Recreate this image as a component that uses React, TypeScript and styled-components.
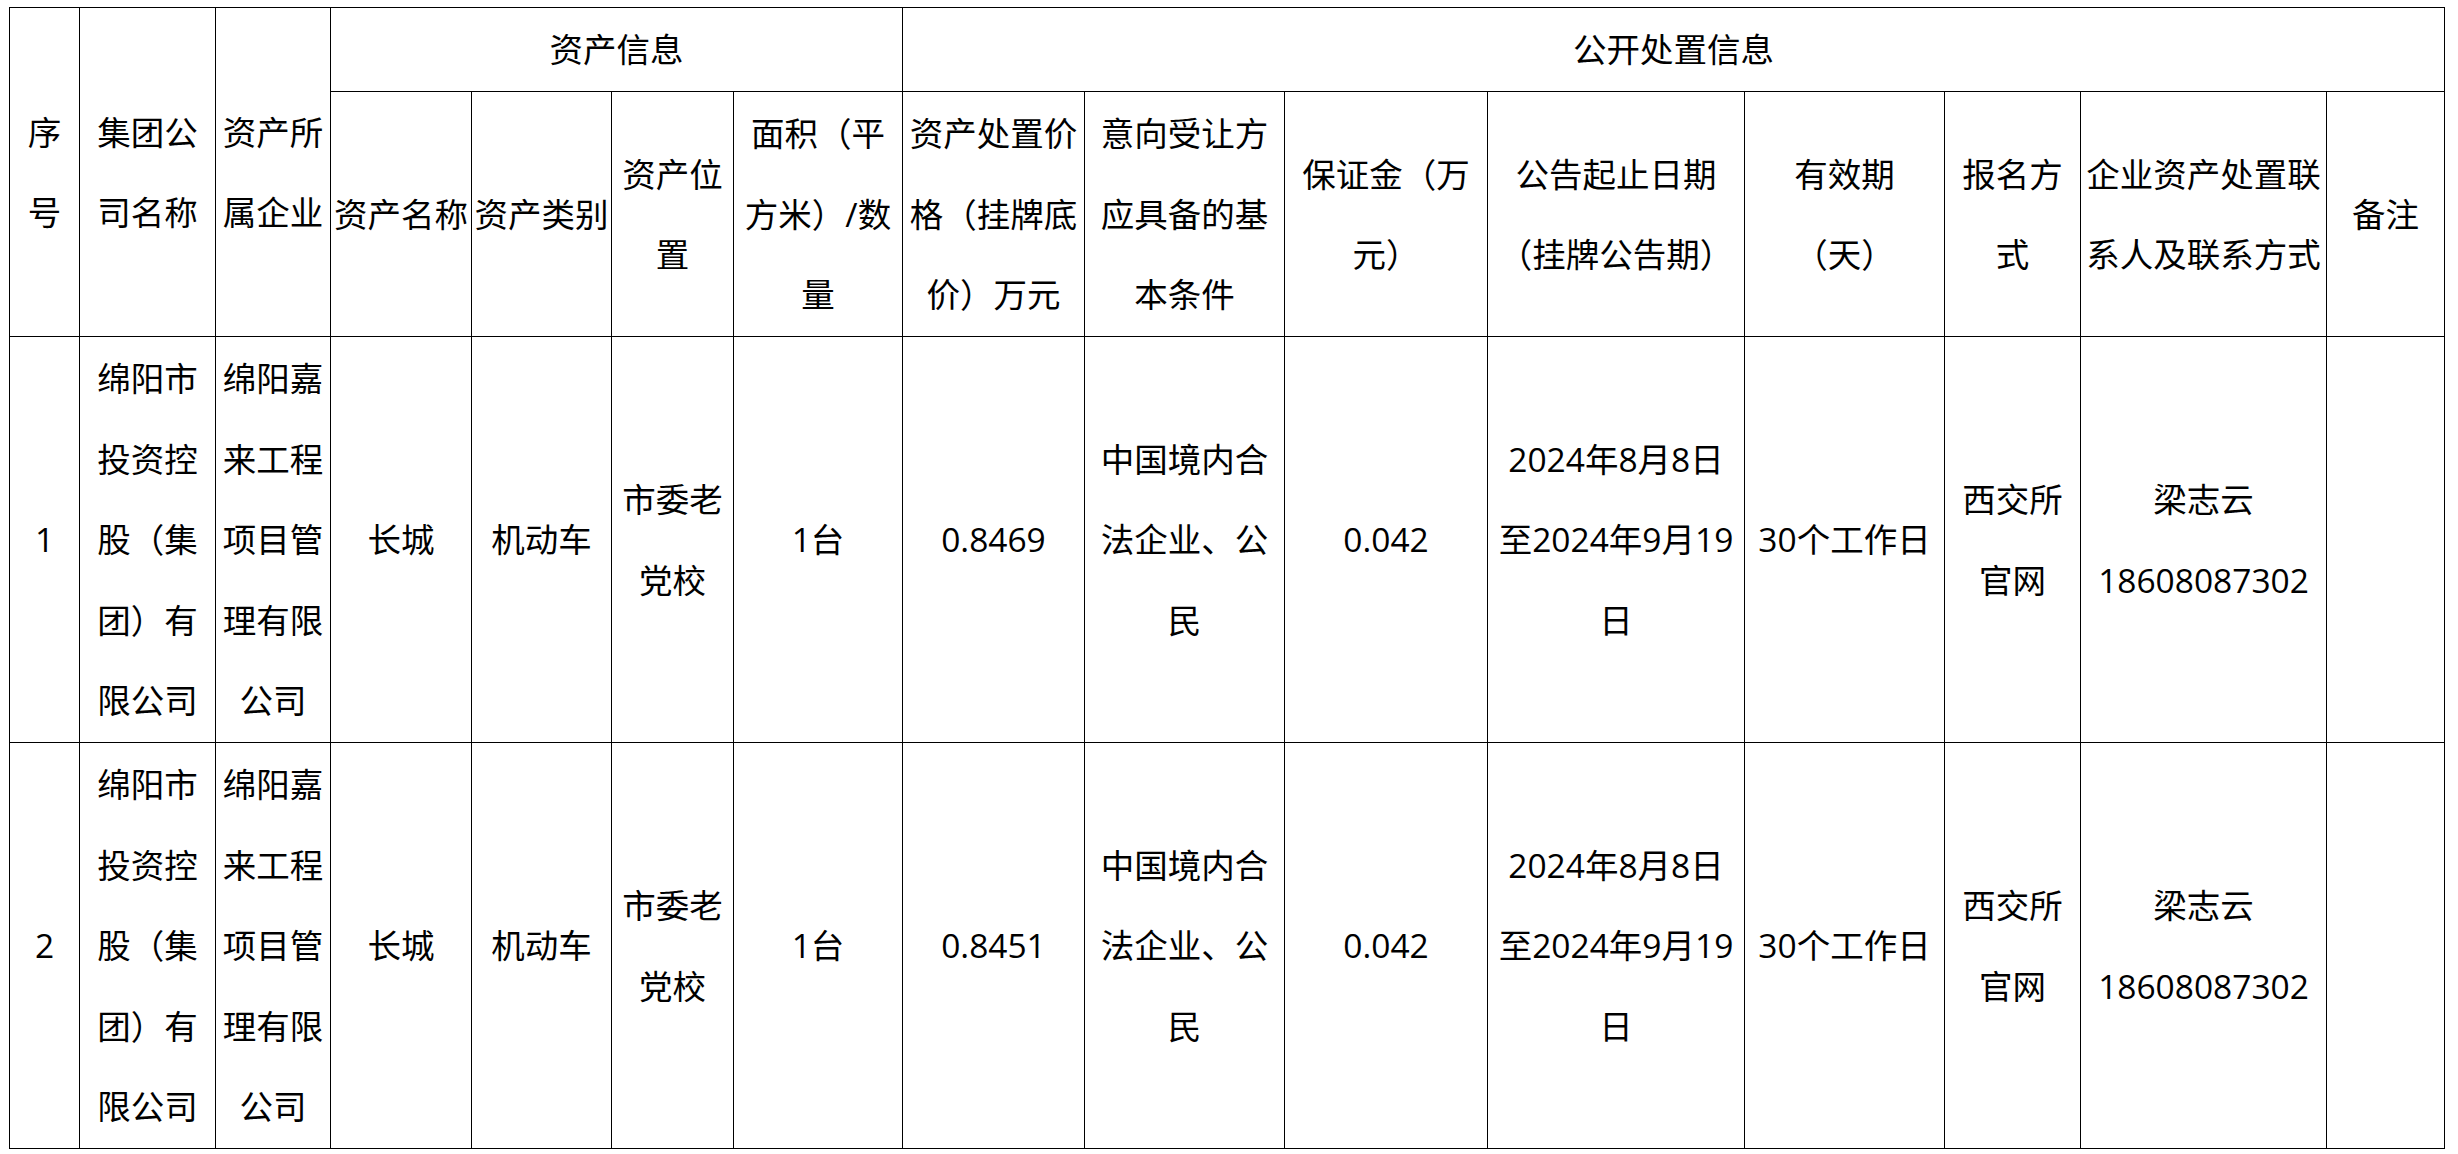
import React from "react";
import styled, { createGlobalStyle } from "styled-components";

const GlobalStyle = createGlobalStyle`
  html, body {
    margin: 0;
    padding: 0;
    background: #ffffff;
  }
  body {
    font-family: "Open Sans", "Noto Sans CJK SC", "Noto Sans", sans-serif;
    color: #000000;
  }
`;

const Page = styled.div`
  padding: 7px 0 0 9px;
`;

const Sheet = styled.div`
  display: grid;
  width: max-content;
  grid-template-columns: 69px 135px 114px 140px 139px 121px 168px 181px 199px 202px 256px 199px 135px 245px 117px;
  grid-template-rows: 83px 244px 405px 405px;
  gap: 1px;
  padding: 1px;
  background: #000000;
  font-size: 33.5px;
`;

const Cell = styled.div<{ $cols?: number; $rows?: number }>`
  grid-column: span ${(p) => p.$cols ?? 1};
  grid-row: span ${(p) => p.$rows ?? 1};
  background: #ffffff;
  display: flex;
  flex-direction: column;
  align-items: center;
  justify-content: center;
  text-align: center;
  overflow: hidden;
`;

const HeadCell = styled(Cell)`
  font-weight: 400;
`;

const BodyCell = styled(Cell)`
  font-weight: 400;
`;

const Line = styled.span`
  display: block;
  white-space: nowrap;
  line-height: 80.5px;
`;

type Head = { lines: string[]; cols?: number; rows?: number };

const topHeads: Head[] = [
  { lines: ["序", "号"], rows: 2 },
  { lines: ["集团公", "司名称"], rows: 2 },
  { lines: ["资产所", "属企业"], rows: 2 },
  { lines: ["资产信息"], cols: 4 },
  { lines: ["公开处置信息"], cols: 8 },
];

const subHeads: string[][] = [
  ["资产名称"],
  ["资产类别"],
  ["资产位", "置"],
  ["面积（平", "方米）/数", "量"],
  ["资产处置价", "格（挂牌底", "价）万元"],
  ["意向受让方", "应具备的基", "本条件"],
  ["保证金（万", "元）"],
  ["公告起止日期", "（挂牌公告期）"],
  ["有效期", "（天）"],
  ["报名方", "式"],
  ["企业资产处置联", "系人及联系方式"],
  ["备注"],
];

const records = [
  { no: "1", price: "0.8469" },
  { no: "2", price: "0.8451" },
];

const rowCells = (no: string, price: string): string[][] => [
  [no],
  ["绵阳市", "投资控", "股（集", "团）有", "限公司"],
  ["绵阳嘉", "来工程", "项目管", "理有限", "公司"],
  ["长城"],
  ["机动车"],
  ["市委老", "党校"],
  ["1台"],
  [price],
  ["中国境内合", "法企业、公", "民"],
  ["0.042"],
  ["2024年8月8日", "至2024年9月19", "日"],
  ["30个工作日"],
  ["西交所", "官网"],
  ["梁志云", "18608087302"],
  [],
];

export default function App() {
  return (
    <>
      <GlobalStyle />
      <Page>
        <Sheet>
          {topHeads.map((h, i) => (
            <HeadCell key={`t${i}`} $cols={h.cols} $rows={h.rows}>
              {h.lines.map((l, j) => (
                <Line key={j}>{l}</Line>
              ))}
            </HeadCell>
          ))}
          {subHeads.map((lines, i) => (
            <HeadCell key={`s${i}`}>
              {lines.map((l, j) => (
                <Line key={j}>{l}</Line>
              ))}
            </HeadCell>
          ))}
          {records.map((r) =>
            rowCells(r.no, r.price).map((lines, i) => (
              <BodyCell key={`r${r.no}-${i}`}>
                {lines.map((l, j) => (
                  <Line key={j}>{l}</Line>
                ))}
              </BodyCell>
            ))
          )}
        </Sheet>
      </Page>
    </>
  );
}
